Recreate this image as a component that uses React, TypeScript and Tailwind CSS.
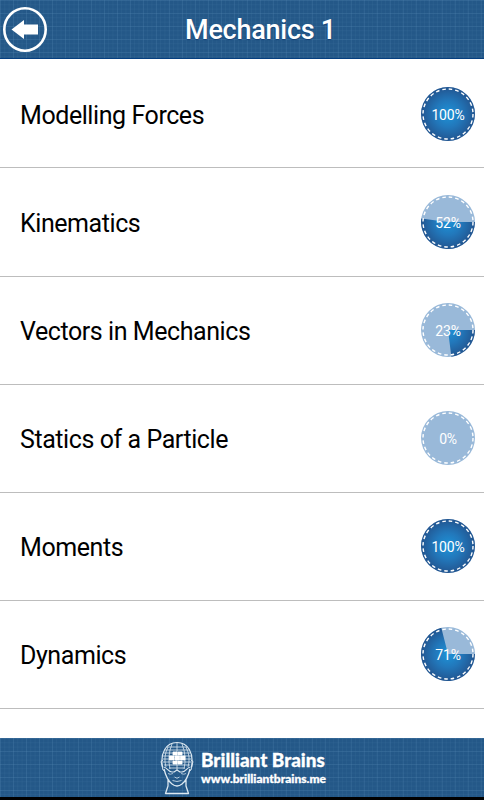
import React from 'react';

interface Topic {
  title: string;
  progress: number;
}

const topics: Topic[] = [
  { title: 'Modelling Forces', progress: 100 },
  { title: 'Kinematics', progress: 52 },
  { title: 'Vectors in Mechanics', progress: 23 },
  { title: 'Statics of a Particle', progress: 0 },
  { title: 'Moments', progress: 100 },
  { title: 'Dynamics', progress: 71 },
];

const blueprint =
  'bg-[#245888] bg-[linear-gradient(to_right,rgba(120,170,210,0.1)_1px,transparent_1px),linear-gradient(to_bottom,rgba(120,170,210,0.1)_1px,transparent_1px),linear-gradient(to_right,rgba(120,170,210,0.07)_1px,transparent_1px),linear-gradient(to_bottom,rgba(120,170,210,0.07)_1px,transparent_1px)] bg-[size:13px_13px,13px_13px,4.333px_4.333px,4.333px_4.333px]';

// Wedge starts at 3 o'clock and runs clockwise
function wedgePath(progress: number) {
  const angle = (progress / 100) * Math.PI * 2;
  const x = 27 + 27 * Math.cos(angle);
  const y = 27 + 27 * Math.sin(angle);
  return `M27 27H54A27 27 0 ${progress > 50 ? 1 : 0} 1 ${x} ${y}Z`;
}

function ProgressDial({ progress }: { progress: number }) {
  return (
    <div className="grid h-[54px] w-[54px] shrink-0 place-items-center">
      <svg viewBox="0 0 54 54" className="col-start-1 row-start-1 h-[54px] w-[54px]">
        <defs>
          <radialGradient id="dial" gradientUnits="userSpaceOnUse" cx="27" cy="27" r="27">
            <stop offset="0" stopColor="#1d93d8" />
            <stop offset="0.5" stopColor="#2277ba" />
            <stop offset="1" stopColor="#225590" />
          </radialGradient>
        </defs>
        <circle cx="27" cy="27" r="27" fill="#99b9d9" />
        {progress === 100 && <circle cx="27" cy="27" r="27" fill="url(#dial)" />}
        {progress > 0 && progress < 100 && <path d={wedgePath(progress)} fill="url(#dial)" />}
        <circle cx="27" cy="27" r="25" fill="none" stroke="#fff" strokeWidth="1.4" strokeDasharray="3.6 2.945" />
      </svg>
      <span className="col-start-1 row-start-1 pt-0.5 text-[14px] leading-none tracking-[-0.2px] text-white">{progress}%</span>
    </div>
  );
}

function BrainHead() {
  return (
    <svg viewBox="0 0 34 54" className="h-[54px] w-[34px]" fill="none" stroke="#dce8f1" strokeLinejoin="round">
      {/* Skull */}
      <path d="M2.5 26C0 12 6 1.5 17 1.5S34 12 31.5 26" strokeWidth="1.2" />
      <path d="M3 19L1 20.5L3 29L5 30M31 19L33 20.5L31 29L29 30" strokeWidth="1" />
      <path d="M3.5 26C7 26 8 31 12 31H14L17 29L20 31H22C26 31 27 26 30.5 26" strokeWidth="1.2" />
      {/* Brain mesh */}
      <path
        d="M7 6H27M5 9H29M4 12H30M3 15H31M3 18H31M3 21H31M4 24H30M9 27H25M17 2V29M12 3Q7 15 10 28M22 3Q27 15 24 28M8 6Q3 16 6 26M26 6Q31 16 28 26"
        strokeWidth="0.8"
      />
      <path d="M13 11H17V14H13ZM18 11H22V14H18ZM9.5 15H14V19H9.5ZM15 15H19.5V19H15ZM20.5 15H25V19H20.5ZM13 20H17V23H13ZM18 20H22V23H18Z" fill="#fff" stroke="#fff" strokeWidth="0.8" />
      {/* Face and neck */}
      <path d="M4 28C6 36 8 40 12 43Q17 47 22 43C26 40 28 36 30 28M8 39V45L5.5 52.5H28.5L26 45V39" strokeWidth="1.3" />
      <path d="M14.5 36Q17 38.5 19.5 36M12.5 39.5Q17 41.5 21.5 39.5" strokeWidth="0.8" />
      <path d="M8 32.5Q10 34 13 32.5M21 32.5Q24 34 26 32.5" strokeWidth="0.7" />
    </svg>
  );
}

export default function App() {
  return (
    <div className="flex h-[800px] w-[484px] flex-col overflow-hidden bg-white font-['Roboto',sans-serif]">
      {/* Header */}
      <header className={`grid h-[59px] shrink-0 grid-cols-[50px_1fr_50px] items-center border-b border-[#063f80] ${blueprint}`}>
        <button aria-label="Back" className="ml-[3px]">
          <svg viewBox="0 0 44 46" className="h-[46px] w-11">
            <ellipse cx="22" cy="23.5" rx="20.7" ry="21.2" fill="none" stroke="#fff" strokeWidth="2.6" />
            <path d="M8.5 23.5L21 14V18.5H35V28.5H21V33Z" fill="#fff" />
          </svg>
        </button>
        <h1 className="pt-[3px] pl-[37px] text-center text-[27px] leading-none font-medium tracking-[-0.25px] text-white [text-shadow:0_1px_1px_#123e75]">
          Mechanics 1
        </h1>
      </header>

      {/* Topics */}
      <ul className="flex-1 pt-[1.4px]">
        {topics.map(t => (
          <li key={t.title} className="flex h-[108.1px] items-center justify-between border-b border-[#bdbdbd] pr-[9px] pl-5">
            <span className="pt-[3px] text-[25px] leading-none tracking-[-0.43px] text-black">{t.title}</span>
            <ProgressDial progress={t.progress} />
          </li>
        ))}
      </ul>

      {/* Footer */}
      <footer className={`flex h-[62px] shrink-0 items-center border-b-[3px] border-black pl-[160px] text-white ${blueprint}`}>
        <BrainHead />
        <div className="ml-[7px] pb-px font-['Lato',sans-serif] font-black whitespace-nowrap [-webkit-text-stroke:0.3px_white]">
          <p className="text-[18.9px] leading-[23px]">Brilliant Brains</p>
          <p className="text-[12px] leading-[15px]">www.brilliantbrains.me</p>
        </div>
      </footer>
    </div>
  );
}
